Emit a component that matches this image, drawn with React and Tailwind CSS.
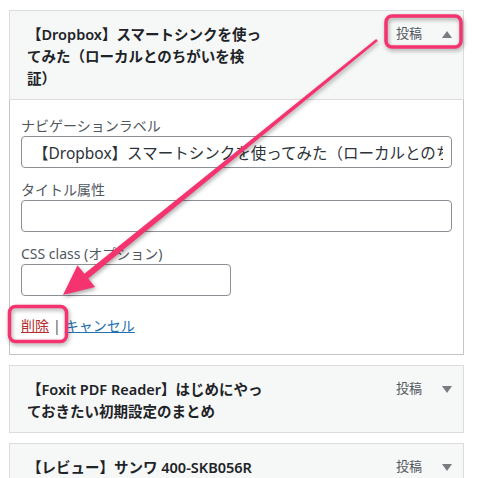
import React from 'react'

const font = { fontFamily: '"Noto Sans", "Noto Sans CJK JP", sans-serif' }

function Caret({ up }) {
  return (
    <svg width="10" height="7" viewBox="0 0 10 7" className="ml-5">
      <path d={up ? 'M0 7 L5 0 L10 7 Z' : 'M0 0 L10 0 L5 7 Z'} fill="#787c82" />
    </svg>
  )
}

function ItemHeader({ lines, open }) {
  return (
    <div className="flex items-start justify-between border border-[#dcdcde] bg-[#f6f7f7] pl-[17px] pr-[11px] pt-3 pb-[10px]">
      <div className="w-[250px] whitespace-nowrap text-[14.5px] font-semibold leading-[22px] text-[#1d2327]">
        {lines.map((line, i) => (
          <React.Fragment key={i}>
            {line}
            {i < lines.length - 1 ? <br /> : null}
          </React.Fragment>
        ))}
      </div>
      <div className="flex h-[22px] items-center text-[13px] text-[#50575e]">
        <span>投稿</span>
        <Caret up={open} />
      </div>
    </div>
  )
}

function Field({ label, value = '', className = 'w-full', first }) {
  return (
    <div className={first ? '' : 'mt-3'}>
      <p className="text-[14px] leading-[20px] text-[#50575e]">{label}</p>
      <input
        readOnly
        value={value}
        className={`${className} h-8 rounded-[4px] border border-[#8c8f94] bg-white pl-[11px] pr-2 text-[15.5px] text-[#2c3338] outline-none`}
      />
    </div>
  )
}

function Overlay() {
  return (
    <svg
      width="479"
      height="478"
      className="pointer-events-none absolute left-0 top-0"
      style={{ filter: 'drop-shadow(1px 2px 2px rgba(0,0,0,0.35))' }}
    >
      <rect x="386" y="16" width="75" height="31" rx="6" fill="none" stroke="#f5336f" strokeWidth="3.5" />
      <rect x="9.5" y="306.5" width="57" height="35" rx="6" fill="none" stroke="#f5336f" strokeWidth="3.5" />
      <polygon
        points="63,295 95.1,287 88.2,278.4 377.8,41 376.2,39 84.4,273.8 77.5,265.2"
        fill="#f5336f"
      />
    </svg>
  )
}

export default function App() {
  return (
    <div className="relative h-[478px] w-[479px] overflow-hidden bg-white" style={font}>
      <div className="flex w-[464px] flex-col gap-[10px] pl-[9px] pt-[10px]">
        <div>
          <ItemHeader open lines={['【Dropbox】スマートシンクを使っ', 'てみた（ローカルとのちがいを検', '証）']} />
          <div className="border-x border-b border-[#c3c4c7] px-[11px] pt-4 pb-[18px]">
            <Field first label="ナビゲーションラベル" value="【Dropbox】スマートシンクを使ってみた（ローカルとのちがいを検証）" />
            <Field label="タイトル属性" />
            <Field label="CSS class (オプション)" className="w-[210px]" />
            <div className="mt-5 text-[14px] leading-[20px]">
              <a className="text-[#b32d2e] underline">削除</a>
              <span className="mx-1 text-[#50575e]">|</span>
              <a className="text-[#2271b1] underline">キャンセル</a>
            </div>
          </div>
        </div>
        <ItemHeader lines={['【Foxit PDF Reader】はじめにやっ', 'ておきたい初期設定のまとめ']} />
        <ItemHeader lines={['【レビュー】サンワ 400-SKB056R']} />
      </div>
      <Overlay />
    </div>
  )
}
